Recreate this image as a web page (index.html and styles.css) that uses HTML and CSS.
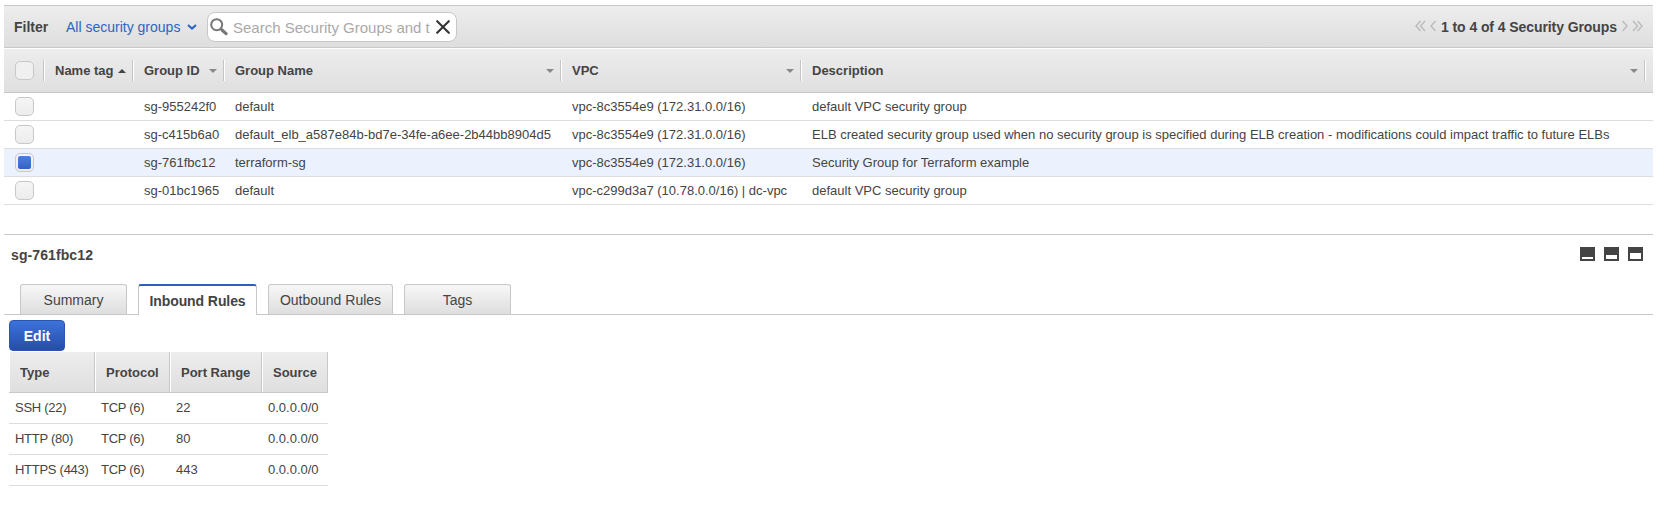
FILE: index.html
```html
<!DOCTYPE html>
<html lang="en">
<head>
<meta charset="utf-8">
<title>Security Groups</title>
<link rel="stylesheet" href="styles.css">
</head>
<body>
<main class="console">
  <header class="toolbar">
    <span class="filter-label">Filter</span>
    <a class="filter-select"><span>All security groups</span>
      <svg width="10" height="6" viewBox="0 0 10 6"><path d="M1 1 5 4.600 9 1" fill="none" stroke="#2b65c5" stroke-width="2"/></svg>
    </a>
    <div class="search">
      <svg class="search-icon" width="18" height="18" viewBox="0 0 18 18" fill="none" stroke="#777"><circle cx="6.7" cy="6.7" r="5.5" stroke-width="2"/><path d="M10.8 11 12.3 12.3" stroke-width="2"/><path d="M12 12 16 15.6" stroke-width="3.2" stroke-linecap="round"/></svg>
      <span class="search-text">Search Security Groups and t</span>
      <svg class="clear-icon" width="14" height="14" viewBox="0 0 14 14" stroke="#333" stroke-width="2.1" stroke-linecap="round"><path d="M1.2 1.2 12.8 12.8M12.8 1.2 1.2 12.8"/></svg>
    </div>
    <nav class="pager">
      <svg width="11" height="12" viewBox="0 0 11 12" class="arrow"><path d="M5.5 1 1 6l4.500 5M10 1 5.500 6 10 11"/></svg>
      <svg width="6" height="12" viewBox="0 0 6 12" class="arrow prev"><path d="M5.500 1 1 6l4.500 5"/></svg>
      <span class="pager-text">1 to 4 of 4 Security Groups</span>
      <svg width="6" height="12" viewBox="0 0 6 12" class="arrow next"><path d="M.5 1 5 6 .5 11"/></svg>
      <svg width="11" height="12" viewBox="0 0 11 12" class="arrow"><path d="M1 1 5.500 6 1 11M5.500 1 10 6 5.500 11"/></svg>
    </nav>
  </header>

  <section class="groups">
    <div class="row head">
      <div class="cell check"><i class="box"></i></div>
      <div class="cell"><span>Name tag</span><i class="sort up"></i></div>
      <div class="cell"><span>Group ID</span><i class="sort"></i></div>
      <div class="cell"><span>Group Name</span><i class="sort"></i></div>
      <div class="cell"><span>VPC</span><i class="sort"></i></div>
      <div class="cell"><span>Description</span><i class="sort"></i></div>
    </div>
    <div class="row">
      <div class="cell check"><i class="box"></i></div><div class="cell"></div>
      <div class="cell"><span>sg-955242f0</span></div><div class="cell"><span>default</span></div>
      <div class="cell"><span>vpc-8c3554e9 (172.31.0.0/16)</span></div><div class="cell"><span>default VPC security group</span></div>
    </div>
    <div class="row">
      <div class="cell check"><i class="box"></i></div><div class="cell"></div>
      <div class="cell"><span>sg-c415b6a0</span></div><div class="cell"><span>default_elb_a587e84b-bd7e-34fe-a6ee-2b44bb8904d5</span></div>
      <div class="cell"><span>vpc-8c3554e9 (172.31.0.0/16)</span></div><div class="cell"><span>ELB created security group used when no security group is specified during ELB creation - modifications could impact traffic to future ELBs</span></div>
    </div>
    <div class="row selected">
      <div class="cell check"><i class="box checked"></i></div><div class="cell"></div>
      <div class="cell"><span>sg-761fbc12</span></div><div class="cell"><span>terraform-sg</span></div>
      <div class="cell"><span>vpc-8c3554e9 (172.31.0.0/16)</span></div><div class="cell"><span>Security Group for Terraform example</span></div>
    </div>
    <div class="row">
      <div class="cell check"><i class="box"></i></div><div class="cell"></div>
      <div class="cell"><span>sg-01bc1965</span></div><div class="cell"><span>default</span></div>
      <div class="cell"><span>vpc-c299d3a7 (10.78.0.0/16) | dc-vpc</span></div><div class="cell"><span>default VPC security group</span></div>
    </div>
  </section>

  <section class="detail">
    <div class="detail-head">
      <h2>sg-761fbc12</h2>
      <div class="sizes"><i class="pane small"></i><i class="pane medium"></i><i class="pane large"></i></div>
    </div>
    <div class="tabs">
      <a class="tab">Summary</a>
      <a class="tab active">Inbound Rules</a>
      <a class="tab outbound">Outbound Rules</a>
      <a class="tab">Tags</a>
    </div>
    <button class="edit">Edit</button>
    <table class="rules">
      <colgroup><col class="c-type"><col class="c-protocol"><col class="c-port"><col class="c-source"></colgroup>
      <thead><tr><th>Type</th><th>Protocol</th><th>Port Range</th><th>Source</th></tr></thead>
      <tbody>
        <tr><td class="tight">SSH (22)</td><td class="tight">TCP (6)</td><td>22</td><td>0.0.0.0/0</td></tr>
        <tr><td class="tight">HTTP (80)</td><td class="tight">TCP (6)</td><td>80</td><td>0.0.0.0/0</td></tr>
        <tr><td class="tight">HTTPS (443)</td><td class="tight">TCP (6)</td><td>443</td><td>0.0.0.0/0</td></tr>
      </tbody>
    </table>
  </section>
</main>
</body>
</html>
```
FILE: styles.css
```css
* { box-sizing: border-box; }
body {
  margin: 0;
  background: #fff;
  color: #444;
  font: 13px/16px "Liberation Sans", Arial, sans-serif;
}
svg { display: block; flex: none; }
.console { width: 1649px; margin: 5px 0 0 4px; }

.toolbar {
  display: flex;
  align-items: center;
  height: 43px;
  padding: 0 10px;
  border-top: 1px solid #c8c8c8;
  border-bottom: 1px solid #c8c8c8;
  background: linear-gradient(#ededed, #dedede);
  font-size: 14px;
  white-space: nowrap;
}
.filter-label { width: 52px; font-weight: bold; }
.filter-select { display: flex; align-items: center; gap: 7px; width: 141px; color: #2b65c5; }
.search {
  display: flex;
  align-items: center;
  width: 250px;
  height: 30px;
  padding-left: 2px;
  border: 1px solid #c8c8c8;
  border-radius: 8px;
  background: #fff;
}
.search-text { width: 203px; padding-top: 2px; margin-left: 5px; color: #a9a9a9; font-size: 15px; line-height: 20px; }
.pager { display: flex; align-items: center; margin-left: auto; font-weight: bold; }
.pager-text { letter-spacing: -0.08px; }
.arrow { fill: none; stroke: #bbb; stroke-width: 1.4; position: relative; top: -1px; }
.prev { margin: 0 5px 0 4px; }
.next { margin: 0 4px 0 5px; }

.row {
  display: grid;
  grid-template-columns: 40px 89px 91px 337px 240px 844px;
  align-items: center;
  height: 28px;
  border-bottom: 1px solid #ddd;
  white-space: nowrap;
}
.cell { display: flex; align-items: center; justify-content: space-between; padding-left: 11px; }
.head {
  height: 45px;
  border-top: 1px solid #fff;
  border-bottom-color: #c8c8c8;
  background: linear-gradient(#ededed, #dfdfdf);
  font-weight: bold;
}
.head .cell { height: 21px; padding-right: 6px; border-right: 1px solid #c4c4c4; box-shadow: 1px 0 #fff; }
.row .check { height: 21px; }
.selected { background: #ebf2fe; }
.box {
  width: 19px;
  height: 19px;
  border: 1px solid #c8c8c8;
  border-radius: 5px;
  background: linear-gradient(#f5f5f5, #ececec);
}
.head .box { background: #f0f0f0; }
.checked { padding: 2px; }
.checked::before { content: ""; display: block; width: 13px; height: 13px; border-radius: 2px; background: linear-gradient(#4b80dd, #3263c4); }
.sort { border: 4px solid transparent; border-top-color: #888; border-bottom: 0; }
.up { border-top: 0; border-bottom: 4px solid #444; }

.detail { margin-top: 29px; border-top: 1px solid #c8c8c8; }
.detail-head { display: flex; justify-content: space-between; padding: 12px 10px 0 7px; height: 49px; }
.detail-head h2 { margin: 0; font-size: 14px; line-height: 16px; letter-spacing: 0.1px; }
.sizes { display: flex; gap: 9px; }
.pane { width: 15px; height: 14px; border: 2px solid #444; background: #fff; }
.small { border-top-width: 10px; }
.medium { border-top-width: 8px; }
.large { border-top-width: 6px; }

.tabs { display: flex; gap: 11px; height: 31px; padding-left: 16px; border-bottom: 1px solid #c8c8c8; font-size: 14px; }
.tab {
  width: 107px;
  height: 30px;
  padding-top: 7px;
  border: 1px solid #c8c8c8;
  border-bottom: 0;
  border-radius: 3px 3px 0 0;
  background: linear-gradient(#f7f7f7, #dedede);
  text-align: center;
  white-space: nowrap;
}
.active { width: 119px; height: 31px; border-top: 2px solid #2b5fc1; background: #fff; font-weight: bold; letter-spacing: -0.08px; }
.outbound { width: 125px; }
.edit {
  display: block;
  width: 56px;
  height: 31px;
  margin: 5px 0 1px 5px;
  padding: 0;
  border: 1px solid #2a55b0;
  border-radius: 4px;
  background: linear-gradient(#3d73da, #264da8);
  color: #fff;
  font: bold 14px/16px "Liberation Sans", Arial, sans-serif;
}
.rules { width: 319px; margin-left: 5px; border-collapse: separate; border-spacing: 0; table-layout: fixed; white-space: nowrap; }
.c-type { width: 86px; }
.c-protocol { width: 75px; }
.c-port { width: 92px; }
.c-source { width: 66px; }
.rules th {
  height: 41px;
  padding: 2px 0 0 11px;
  border-right: 1px solid #c8c8c8;
  border-bottom: 1px solid #c8c8c8;
  background: linear-gradient(#ededed, #dfdfdf);
  box-shadow: inset 1px 0 #fff;
  text-align: left;
}
.rules td { height: 31px; padding: 0 0 0 6px; border-bottom: 1px solid #ddd; }
.rules .tight { letter-spacing: -0.27px; }
```
